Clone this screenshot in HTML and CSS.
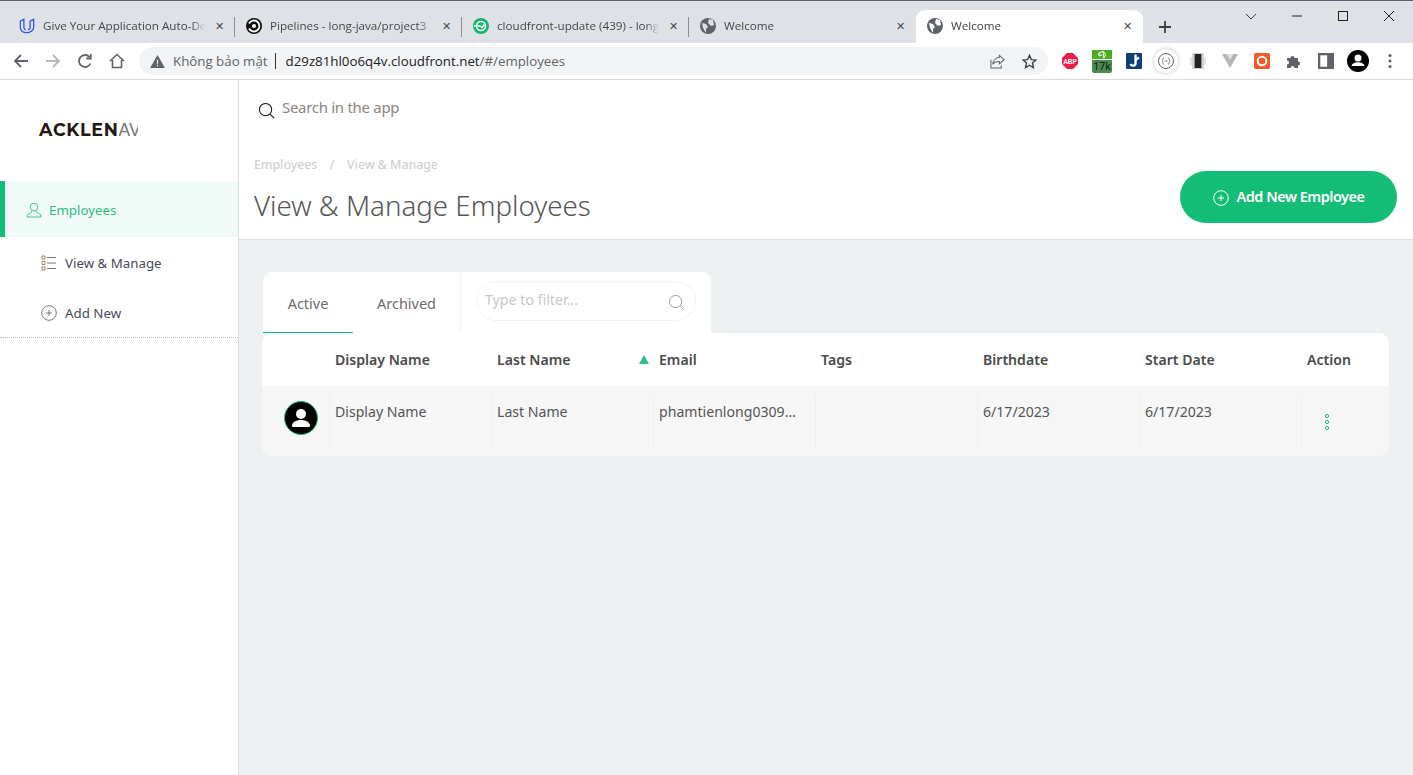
FILE: index.html
```html
<!DOCTYPE html>
<html lang="en">
<head>
    <meta charset="UTF-8">
    <title>Welcome</title>
    <link rel="stylesheet" href="styles.css">
</head>
<body>
    <header class="chrome">
        <div class="tab-strip">
            <div class="tab">
                <svg class="favicon" viewBox="0 0 18 18"><path d="M1.500 3.500v7c0 3.500 3 6 7 6s8-2.500 8-6v-9l-4 2v7c0 1.500-1 2.500-2.500 2.500M1.500 3.500l4-2v9c0 1 .8 2.500 2 3" fill="none" stroke="#2f4ff0" stroke-width="1.400"/></svg>
                <span class="tab-title">Give Your Application Auto-De</span>
                <span class="tab-close">✕</span>
            </div>
            <div class="tab">
                <svg class="favicon" viewBox="0 0 16 16"><circle cx="8" cy="8" r="8" fill="#111"/><circle cx="8" cy="8" r="2" fill="#fff"/><path d="M3 5.500A5.500 5.500 0 1 1 3 10.500" fill="none" stroke="#fff" stroke-width="1.800"/></svg>
                <span class="tab-title">Pipelines - long-java/project3</span>
                <span class="tab-close">✕</span>
            </div>
            <div class="tab">
                <svg class="favicon" viewBox="0 0 16 16"><circle cx="8" cy="8" r="8" fill="#12b76a"/><circle cx="8" cy="8" r="4.500" fill="none" stroke="#fff" stroke-width="1.600"/><path d="M1 8h6l2 1.500 2.500-3" fill="none" stroke="#fff" stroke-width="1.500"/></svg>
                <span class="tab-title">cloudfront-update (439) - long</span>
                <span class="tab-close">✕</span>
            </div>
            <div class="tab tab-last">
                <svg class="favicon" viewBox="0 0 16 16"><circle cx="8" cy="8" r="8" fill="#5f6368"/><path d="M2 5l4 1 2 3-2 2v4L3 10zM9 1l4 1 1 5-3 1-3-3z" fill="#dee1e6"/></svg>
                <span class="tab-title">Welcome</span>
                <span class="tab-close">✕</span>
            </div>
            <div class="tab tab-active">
                <svg class="favicon" viewBox="0 0 16 16"><circle cx="8" cy="8" r="8" fill="#5f6368"/><path d="M2 5l4 1 2 3-2 2v4L3 10zM9 1l4 1 1 5-3 1-3-3z" fill="#fff"/></svg>
                <span class="tab-title">Welcome</span>
                <span class="tab-close">✕</span>
            </div>
            <svg class="new-tab" viewBox="0 0 12 12"><path d="M6 0v12M0 6h12" stroke="#3c4043" stroke-width="1.800"/></svg>
            <div class="window-controls">
                <svg viewBox="0 0 12 12"><path d="M1 4l5 5 5-5" fill="none" stroke="#3c4043"/></svg>
                <svg viewBox="0 0 12 12"><path d="M1 6h10" stroke="#222"/></svg>
                <svg viewBox="0 0 12 12"><rect x="1.500" y="1.500" width="9" height="9" fill="none" stroke="#222"/></svg>
                <svg viewBox="0 0 12 12"><path d="M1 1l10 10M11 1L1 11" stroke="#222"/></svg>
            </div>
        </div>
        <div class="toolbar">
            <div class="nav-buttons">
                <svg viewBox="0 0 16 16"><path d="M15 8H2M8 2L2 8l6 6" fill="none" stroke="#5f6368" stroke-width="1.800"/></svg>
                <svg viewBox="0 0 16 16"><path d="M1 8h13M8 2l6 6-6 6" fill="none" stroke="#b3b6ba" stroke-width="1.800"/></svg>
                <svg viewBox="0 0 16 16"><path d="M13.500 10.500A6 6 0 1 1 12.500 4M13.800 1v4.500H9.300" fill="none" stroke="#5f6368" stroke-width="1.800"/></svg>
                <svg viewBox="0 0 16 16"><path d="M1 8l7-6.500L15 8M3.500 7v7.500h9V7" fill="none" stroke="#5f6368" stroke-width="1.600"/></svg>
            </div>
            <div class="omnibox">
                <svg class="warn" viewBox="0 0 16 14"><path d="M8 0l8 14H0z" fill="#5f6368"/><path d="M8 5v4.500M8 10.500v1.500" stroke="#fff" stroke-width="1.300"/></svg>
                <span class="not-secure">Không bảo mật</span>
                <span class="url"><b>d29z81hl0o6q4v.cloudfront.net</b>/#/employees</span>
                <svg class="omni-icon" viewBox="0 0 16 16"><path d="M10 1.500l5 4.500-5 4.500V8C6 8 4 9 3 11c0-4 3-7 7-7.500zM1 6v9h11v-3" fill="none" stroke="#5f6368" stroke-width="1.100"/></svg>
                <svg class="omni-icon star" viewBox="0 0 16 16"><path d="M8 1.500l2 4.500 4.800.5-3.600 3.200 1 4.800L8 12l-4.200 2.500 1-4.800L1.200 6.500 6 6z" fill="none" stroke="#3c4043" stroke-width="1.500"/></svg>
            </div>
            <div class="extensions">
                <span class="ext"><svg viewBox="0 0 16 16"><path d="M5 0h6l5 5v6l-5 5H5l-5-5V5z" fill="#ec1c4b"/><text x="8" y="10.500" class="abp">ABP</text></svg></span>
                <span class="ext ext-counter">
                    <span class="counter-top"><svg viewBox="0 0 20 9"><path d="M7 5a3.200 3.200 0 1 1 4 3M7 2.500V6l3-1M11 1l1 7" fill="none" stroke="#fff"/></svg></span>
                    <span class="counter-num">17k</span>
                </span>
                <span class="ext"><svg viewBox="0 0 16 16"><rect width="16" height="16" rx="1" fill="#0f3d7a"/><path d="M9.500 1.500v9c0 2.500-4 3-5 .5M13 4.500L9.500 7" fill="none" stroke="#fff" stroke-width="2.400"/></svg></span>
                <span class="ext ext-round"><svg viewBox="0 0 16 16"><circle cx="8" cy="8" r="7.500" fill="#fff" stroke="#5f6368"/><path d="M6 4.500c-1.500 0-1 3.500-2 3.500 1 0 .5 3.500 2 3.500M10 4.500c1.500 0 1 3.500 2 3.500-1 0-.5 3.500-2 3.500M6.500 8h3" fill="none" stroke="#5f6368" stroke-width=".8"/></svg></span>
                <span class="ext"><svg viewBox="0 0 16 16"><rect x="3" y="0" width="10" height="16" rx="1" fill="#fff" stroke="#aaa"/><rect x="4.500" y="1" width="7" height="14" fill="#222"/><path d="M1 4v8M15 4v8" stroke="#ccc"/></svg></span>
                <span class="ext"><svg viewBox="0 0 16 16"><path d="M0 1h16L8 15z" fill="#b5b5b5"/><path d="M4.500 1h7L8 7z" fill="#e0e0e0"/></svg></span>
                <span class="ext"><svg viewBox="0 0 16 16"><rect width="16" height="16" rx="2" fill="#f4572a"/><circle cx="8" cy="8" r="4.300" fill="none" stroke="#fff" stroke-width="2"/></svg></span>
                <span class="ext"><svg viewBox="0 0 16 16"><path d="M1 5h3.500a2 2 0 1 1 4 0H12v3.500a2 2 0 1 1 0 4V15H8.500a2 2 0 1 0-4 0H1v-3.500a2 2 0 1 0 0-4z" fill="#5f6368"/></svg></span>
                <span class="ext"><svg viewBox="0 0 14 14"><rect x="1" y="1" width="12" height="12" fill="none" stroke="#5f6368" stroke-width="2"/><rect x="8" y="1" width="5" height="12" fill="#5f6368"/></svg></span>
                <span class="ext ext-big"><svg viewBox="0 0 22 22"><circle cx="11" cy="11" r="11" fill="#000"/><circle cx="11" cy="8" r="3.500" fill="#fff"/><path d="M4.500 16c1-5 12-5 13 0z" fill="#fff"/></svg></span>
                <span class="ext"><svg viewBox="0 0 16 16"><circle cx="8" cy="2.500" r="1.500" fill="#5f6368"/><circle cx="8" cy="8" r="1.500" fill="#5f6368"/><circle cx="8" cy="13.500" r="1.500" fill="#5f6368"/></svg></span>
            </div>
        </div>
    </header>

    <div class="app">
        <aside class="sidebar">
            <div class="logo"><b>ACKLEN</b><span class="logo-thin">AV</span></div>
            <a class="nav-item nav-active">
                <svg viewBox="0 0 16 16"><circle cx="8" cy="5" r="3.800" fill="none" stroke="#14bd76" stroke-width=".8"/><path d="M5.800 8.500v1.500L1 13v2h14v-2l-4.800-3V8.500" fill="none" stroke="#14bd76" stroke-width=".8"/></svg>
                Employees
            </a>
            <a class="nav-item nav-sub nav-manage">
                <svg viewBox="0 0 16 16"><path d="M1 1h3v3H1zM1 6.500h3v3H1zM1 12h3v3H1z" fill="none" stroke="#8a6d3b" stroke-width=".8"/><path d="M6 2.500h9M6 8h9M6 13.500h9" stroke="#555" stroke-width=".8"/></svg>
                View &amp; Manage
            </a>
            <a class="nav-item nav-sub nav-add">
                <svg viewBox="0 0 16 16"><circle cx="8" cy="8" r="7.300" fill="none" stroke="#555" stroke-width=".8"/><path d="M8 5v6M5 8h6" stroke="#555" stroke-width=".8"/></svg>
                Add New
            </a>
        </aside>

        <main class="content">
            <div class="searchbar">
                <svg viewBox="0 0 18 18"><circle cx="8" cy="8" r="6.500" fill="none" stroke="#111" stroke-width="1.100"/><path d="M12.800 12.800l4.200 4.200" stroke="#111" stroke-width="1.100"/></svg>
                <span>Search in the app</span>
            </div>
            <div class="page-head">
                <div>
                    <div class="breadcrumb"><span>Employees</span><span>/</span><span>View &amp; Manage</span></div>
                    <h1>View &amp; Manage Employees</h1>
                </div>
                <button class="add-button">
                    <svg viewBox="0 0 16 16"><circle cx="8" cy="8" r="7.300" fill="none" stroke="#fff"/><path d="M8 5v6M5 8h6" stroke="#fff"/></svg>
                    Add New Employee
                </button>
            </div>

            <div class="panel">
                <div class="tabs">
                    <div class="list-tab list-tab-active">Active</div>
                    <div class="list-tab list-tab-archived">Archived</div>
                    <div class="filter-wrap">
                        <div class="filter">
                            <span>Type to filter...</span>
                            <svg viewBox="0 0 18 18"><circle cx="8" cy="8" r="6.500" fill="none" stroke="#999" stroke-width="1"/><path d="M12.800 12.800l4.200 4.200" stroke="#999"/></svg>
                        </div>
                    </div>
                </div>
                <div class="table">
                    <div class="row row-head">
                        <div class="cell"></div>
                        <div class="cell">Display Name</div>
                        <div class="cell cell-sort">Last Name<span class="sort-arrow"></span></div>
                        <div class="cell">Email</div>
                        <div class="cell">Tags</div>
                        <div class="cell">Birthdate</div>
                        <div class="cell">Start Date</div>
                        <div class="cell">Action</div>
                    </div>
                    <div class="row row-body">
                        <div class="cell cell-avatar">
                            <svg viewBox="0 0 34 34"><circle cx="17" cy="17" r="16.500" fill="#000" stroke="#14bd76"/><circle cx="17" cy="13" r="5" fill="#fff"/><path d="M8 25c0-8 18-8 18 0 0 1-1 1-2 1H10c-1 0-2 0-2-1z" fill="#fff"/></svg>
                        </div>
                        <div class="cell">Display Name</div>
                        <div class="cell">Last Name</div>
                        <div class="cell cell-email"><span class="ellipsis">phamtienlong0309@gmail.com</span></div>
                        <div class="cell"></div>
                        <div class="cell">6/17/2023</div>
                        <div class="cell">6/17/2023</div>
                        <div class="cell cell-action">
                            <svg viewBox="0 0 6 18"><circle cx="3" cy="3" r="1.600" fill="none" stroke="#14bd76"/><circle cx="3" cy="9" r="1.600" fill="none" stroke="#14bd76"/><circle cx="3" cy="15" r="1.600" fill="none" stroke="#14bd76"/></svg>
                        </div>
                    </div>
                </div>
            </div>
        </main>
    </div>
</body>
</html>
```

FILE: styles.css
```css
* {
    box-sizing: border-box;
}

html, body {
    height: 100%;
}

body {
    margin: 0;
    display: flex;
    flex-direction: column;
    overflow: hidden;
    background-color: #fff;
    font-family: "Noto Sans", "Open Sans", sans-serif;
    color: #4a4a4a;
}

/* browser bars */
.chrome {
    flex: none;
    font-family: "Open Sans", "Noto Sans", sans-serif;
}

.tab-strip {
    height: 43px;
    padding: 9px 0 0 8px;
    display: flex;
    background-color: #dee1e6;
    border-top: 1px solid #5f6368;
}

.tab {
    width: 227px;
    height: 33px;
    padding: 0 10px 2px 11px;
    display: flex;
    align-items: center;
    position: relative;
    font-size: 11.650px;
    color: #45474a;
}

.tab::after {
    content: "";
    position: absolute;
    right: 0;
    top: 7px;
    height: 20px;
    width: 1px;
    background-color: #8b8e92;
}

.tab-last::after, .tab-active::after {
    display: none;
}

.tab-active {
    background-color: #fff;
    border-radius: 9px 9px 0 0;
    color: #3c4043;
}

.favicon {
    width: 16px;
    height: 16px;
    flex: none;
    margin-right: 8px;
}

.tab-title {
    flex: 1;
    white-space: nowrap;
    overflow: hidden;
    -webkit-mask-image: linear-gradient(to right, #000 92%, transparent);
    mask-image: linear-gradient(to right, #000 92%, transparent);
}

.tab-close {
    flex: none;
    width: 12px;
    margin-left: 8px;
    font-size: 11px;
    text-align: center;
    color: #45474a;
}

.new-tab {
    width: 12px;
    height: 12px;
    margin: 11px 0 0 16px;
}

.window-controls {
    margin-left: auto;
    margin-top: -9px;
    display: flex;
}

.window-controls svg {
    width: 12px;
    height: 12px;
    margin-top: 9px;
    margin-right: 34px;
    margin-left: 0;
}

.window-controls svg:last-child {
    margin-right: 18px;
}

.toolbar {
    height: 37px;
    display: flex;
    align-items: center;
    background-color: #fff;
    border-bottom: 1px solid #d9dbde;
}

.nav-buttons {
    display: flex;
    gap: 16px;
    padding-left: 13px;
    width: 139px;
}

.nav-buttons svg {
    width: 16px;
    height: 16px;
}

.omnibox {
    width: 909px;
    height: 28px;
    padding: 0 10px 0 11px;
    display: flex;
    align-items: center;
    background-color: #f1f3f4;
    border-radius: 14px;
    font-size: 13.300px;
}

.warn {
    width: 15px;
    height: 13px;
    margin-right: 8px;
}

.not-secure {
    color: #5f6368;
    padding-right: 7px;
    border-right: 1px solid #333;
    line-height: 16px;
}

.url {
    margin-left: 10px;
    color: #5f6368;
    flex: 1;
}

.url b {
    font-weight: 400;
    color: #202124;
}

.omni-icon {
    width: 15px;
    height: 15px;
}

.star {
    margin-left: 17px;
    margin-right: 1px;
}

.extensions {
    display: flex;
    padding-left: 6px;
}

.ext {
    width: 32px;
    height: 32px;
    display: flex;
    align-items: center;
    justify-content: center;
}

.ext svg {
    width: 16px;
    height: 16px;
}

.ext-big svg {
    width: 22px;
    height: 22px;
}

.ext-round svg {
    width: 16px;
    height: 16px;
}

.ext-round {
    border-radius: 50%;
    box-shadow: 0 0 4px rgba(0, 0, 0, 0.25);
    width: 24px;
    height: 24px;
    margin: 4px;
}

.abp {
    font-family: "Liberation Sans", sans-serif;
    font-size: 6.500px;
    font-weight: 700;
    fill: #fff;
    text-anchor: middle;
}

.ext-counter {
    flex-direction: column;
}

.counter-top {
    width: 20px;
    height: 9px;
    background-color: #4cae1f;
}

.counter-top svg {
    width: 20px;
    height: 9px;
    display: block;
}

.counter-num {
    width: 20px;
    height: 13px;
    margin-top: 1px;
    background-color: #4a8a4e;
    color: #111;
    font-size: 10.500px;
    line-height: 13px;
    text-align: center;
    border-radius: 0 0 2px 2px;
}

/* app */
.app {
    flex: 1;
    display: flex;
    min-height: 0;
}

.sidebar {
    width: 239px;
    flex: none;
    background-color: #fff;
    border-right: 1px solid #dcdfe1;
}

.logo {
    width: 138px;
    height: 101px;
    padding: 38px 0 0 39px;
    overflow: hidden;
    white-space: nowrap;
    font-family: "Montserrat", "Liberation Sans", sans-serif;
    font-size: 17.500px;
    line-height: 24px;
    letter-spacing: 0.7px;
}

.logo b {
    font-weight: 700;
    color: #231815;
}

.logo-thin {
    font-family: "Liberation Sans", sans-serif;
    font-weight: 400;
    letter-spacing: 0;
    color: #777;
}

.nav-item {
    display: flex;
    align-items: center;
    font-size: 13.300px;
    color: #454a5a;
}

.nav-item svg {
    width: 16px;
    height: 16px;
    margin-right: 8px;
}

.nav-active {
    height: 56px;
    padding-left: 21px;
    padding-top: 2px;
    background-color: #f0fbf8;
    border-left: 5px solid #14bd76;
    color: #2cbb7c;
}

.nav-active svg {
    margin-right: 7px;
}

.nav-sub {
    padding-left: 41px;
}

.nav-manage {
    height: 52px;
}

.nav-add {
    height: 49px;
    padding-bottom: 1px;
    border-bottom: 1px dotted #b9b9b9;
}

.content {
    flex: 1;
    min-width: 0;
    background-color: #edf1f2;
}

.searchbar {
    height: 68px;
    padding: 0 0 14px 19px;
    display: flex;
    align-items: center;
    gap: 7px;
    background-color: #fff;
    font-size: 15px;
    letter-spacing: -0.3px;
    color: #8a8583;
}

.searchbar svg {
    width: 17px;
    height: 17px;
    margin-top: 6px;
}

.page-head {
    height: 92px;
    padding: 0 16px 0 15px;
    display: flex;
    justify-content: space-between;
    background-color: #fff;
    border-bottom: 1px solid #dcdfe1;
}

.breadcrumb {
    display: flex;
    gap: 12.500px;
    padding-top: 8px;
    font-size: 12.300px;
    line-height: 17px;
    font-weight: 500;
    color: #cfcfcf;
}

h1 {
    margin: 12px 0 0;
    font-size: 27.700px;
    line-height: 40px;
    font-weight: 300;
    color: #555;
}

.add-button {
    width: 217px;
    height: 52px;
    margin-top: 23px;
    padding-bottom: 4px;
    display: flex;
    align-items: center;
    justify-content: center;
    gap: 8px;
    border: none;
    border-radius: 26px;
    background-color: #14bd76;
    color: #fff;
    font-family: inherit;
    font-size: 14.500px;
    font-weight: 600;
    letter-spacing: -0.5px;
}

.add-button svg {
    width: 16px;
    height: 16px;
    margin-top: 4px;
}

.panel {
    padding: 32px 24px 0 23px;
}

.tabs {
    width: 448px;
    height: 61px;
    margin-left: 1px;
    display: flex;
    background-color: #fff;
    border-radius: 10px 10px 0 0;
}

.list-tab {
    height: 61px;
    padding-top: 21px;
    text-align: center;
    font-size: 14.500px;
    color: #6d6a6a;
}

.list-tab-active {
    width: 90px;
    border-bottom: 1px solid #14bd76;
}

.list-tab-archived {
    width: 107px;
}

.filter-wrap {
    flex: 1;
    padding: 9px 15px 0 15px;
    border-left: 1px solid #f0f0f0;
}

.filter {
    height: 40px;
    padding: 0 10px 3px 8px;
    display: flex;
    align-items: center;
    justify-content: space-between;
    border: 1px solid #f1f1f1;
    border-radius: 20px;
    font-size: 14.200px;
    color: #c9c7c7;
}

.filter svg {
    width: 17px;
    height: 17px;
    margin-top: 5px;
}

.table {
    width: 1127px;
    background-color: #fff;
    border-radius: 10px;
    overflow: hidden;
}

.row {
    display: grid;
    grid-template-columns: 67px repeat(6, 162px) 88px;
}

.row-head {
    height: 53px;
    align-items: center;
    font-size: 14.100px;
    font-weight: 600;
    color: #4a4a4a;
}

.row-head .cell {
    padding: 0 5px 0 6px;
}

.cell-sort {
    display: flex;
    justify-content: space-between;
    align-items: center;
    padding-right: 4px !important;
}

.sort-arrow {
    width: 0;
    height: 0;
    border-left: 5px solid transparent;
    border-right: 5px solid transparent;
    border-bottom: 9px solid #2ebd85;
}

.row-body {
    height: 70px;
    padding: 8px 0;
    background-color: #f6f6f6;
    font-size: 14.100px;
    color: #555;
}

.row-body .cell {
    padding: 8px 5px 0 5px;
    border-left: 1px solid #f0f0f0;
    min-width: 0;
}

.row-body .cell:first-child {
    border-left: none;
}

.row-body .cell-avatar {
    padding: 7px 0 0 22px;
}

.cell-avatar svg {
    width: 34px;
    height: 34px;
    display: block;
}

.row-body .cell-email {
    padding-right: 15px;
}

.ellipsis {
    display: block;
    overflow: hidden;
    white-space: nowrap;
    text-overflow: ellipsis;
}

.row-body .cell-action {
    padding: 19px 0 0 22px;
}

.cell-action svg {
    width: 6px;
    height: 18px;
    display: block;
}
```
